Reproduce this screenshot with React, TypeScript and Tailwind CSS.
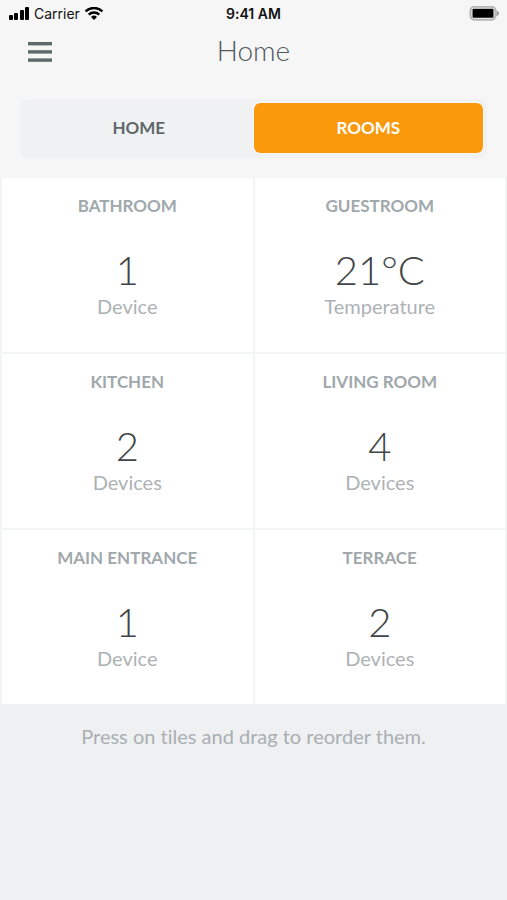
import { useState } from "react";

type Room = { name: string; value: string; label: string };

const rooms: Room[] = [
  { name: "BATHROOM", value: "1", label: "Device" },
  { name: "GUESTROOM", value: "21°C", label: "Temperature" },
  { name: "KITCHEN", value: "2", label: "Devices" },
  { name: "LIVING ROOM", value: "4", label: "Devices" },
  { name: "MAIN ENTRANCE", value: "1", label: "Device" },
  { name: "TERRACE", value: "2", label: "Devices" },
];

function StatusBar() {
  return (
    <div className="grid h-7 grid-cols-3 items-center px-2 font-['Inter','Liberation_Sans',sans-serif] text-sm text-[#111]">
      <div className="flex items-center gap-1">
        <svg width="22" height="14" viewBox="0 0 22 14" fill="#000" aria-hidden="true">
          <rect x="1" y="8" width="4" height="5" rx="1" />
          <rect x="6" y="6" width="4" height="7" rx="1" />
          <rect x="12" y="3" width="4" height="10" rx="1" />
          <rect x="17" y="0" width="4" height="13" rx="1" />
        </svg>
        <span>Carrier</span>
        <svg width="20" height="14" viewBox="0 0 20 14" fill="none" stroke="#000" strokeWidth="2.4" aria-hidden="true">
          <path d="M1.6 4.4a12 12 0 0 1 16.8 0" />
          <path d="M4.7 7.7a7.6 7.6 0 0 1 10.6 0" />
          <path d="M10 13 7 9.9a4.3 4.3 0 0 1 6 0Z" fill="#000" stroke="none" />
        </svg>
      </div>
      <div className="text-center font-semibold">9:41 AM</div>
      <div className="flex justify-end">
        <svg width="30" height="16" viewBox="0 0 30 16" aria-hidden="true">
          <rect x="1.5" y="0.8" width="25" height="13" rx="4" fill="#f7f7f7" stroke="#b4b4b4" strokeWidth="2" />
          <rect x="3.5" y="2.8" width="21" height="9" rx="1" fill="#000" />
          <path d="M27.5 4.5c3.500 1.200 3.500 4.400 0 5.600Z" fill="#a0a0a0" />
        </svg>
      </div>
    </div>
  );
}

function Tab({ text, active, onSelect }: { text: string; active: boolean; onSelect: () => void }) {
  return (
    <button
      type="button"
      role="tab"
      aria-selected={active}
      onClick={onSelect}
      className={
        active
          ? "flex-1 rounded-md bg-[#fb990d] text-white outline-1 outline-[#fafafc]"
          : "flex-1 rounded-md text-[#5f686a]"
      }
    >
      {text}
    </button>
  );
}

export default function App() {
  const [tab, setTab] = useState("ROOMS");
  return (
    <div className="flex min-h-screen flex-col bg-[#eef0f2] font-['Lato','Liberation_Sans',sans-serif] [font-variant-ligatures:none]">
      <header className="bg-[#f6f6f6] pb-5">
        <StatusBar />
        <div className="grid h-12 grid-cols-[80px_1fr_80px] items-center">
          <button type="button" aria-label="Menu" className="flex justify-center">
            <svg width="24" height="20" viewBox="0 0 24 20" fill="#5f6a6a" aria-hidden="true">
              <rect y="0" width="24" height="3.4" />
              <rect y="8.2" width="24" height="3.4" />
              <rect y="16.4" width="24" height="3.4" />
            </svg>
          </button>
          <h1 className="pb-1 text-center text-[28px] font-light text-[#4f585c]">Home</h1>
        </div>
        <div
          role="tablist"
          className="mx-5 mt-[23px] flex h-[59px] rounded-lg bg-[#eff1f2] px-1 pt-1 pb-[5px] text-[17px] font-bold"
        >
          <Tab text="HOME" active={tab === "HOME"} onSelect={() => setTab("HOME")} />
          <Tab text="ROOMS" active={tab === "ROOMS"} onSelect={() => setTab("ROOMS")} />
        </div>
      </header>
      <main>
        <ul className="grid grid-cols-2 gap-0.5 bg-[#f3f4f4] px-0.5">
          {rooms.map((room) => (
            <li key={room.name} className="flex h-[174px] flex-col items-center bg-white pt-4">
              <h2 className="text-[17px] leading-6 font-bold text-[#a0a8ab]">{room.name}</h2>
              <p className="mt-7 text-[40px] leading-[48px] font-light text-[#3f4546]">{room.value}</p>
              <p className="text-xl leading-6 text-[#adb2b5]">{room.label}</p>
            </li>
          ))}
        </ul>
        <p className="mt-5 text-center text-xl leading-6 text-[#a9afb2]">
          Press on tiles and drag to reorder them.
        </p>
      </main>
    </div>
  );
}
